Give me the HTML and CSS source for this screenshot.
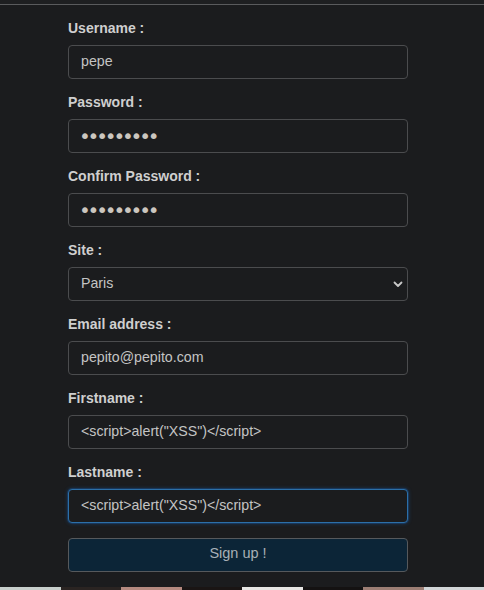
FILE: index.html
```html
<!DOCTYPE html>
<html lang="en">
<head>
<meta charset="utf-8">
<title>Sign up</title>
<link rel="stylesheet" href="styles.css">
</head>
<body>
<div class="topbar"></div>
<form class="signup">
  <div class="group">
    <label class="lbl" for="u">Username :</label>
    <input class="field" id="u" type="text" value="pepe">
  </div>
  <div class="group">
    <label class="lbl" for="p">Password :</label>
    <input class="field pw" id="p" type="password" value="pepepepep">
  </div>
  <div class="group">
    <label class="lbl" for="cp">Confirm Password :</label>
    <input class="field pw" id="cp" type="password" value="pepepepep">
  </div>
  <div class="group">
    <label class="lbl" for="s">Site :</label>
    <div class="selwrap">
      <select class="field sel" id="s"><option>Paris</option></select>
      <svg class="chev" width="10" height="8" viewBox="0 0 10 8"><path d="M1.5 2.5 L5 6 L8.5 2.5" fill="none" stroke="#c8c8c8" stroke-width="1.8" stroke-linecap="round" stroke-linejoin="round"/></svg>
    </div>
  </div>
  <div class="group">
    <label class="lbl" for="e">Email address :</label>
    <input class="field" id="e" type="text" value="pepito@pepito.com">
  </div>
  <div class="group">
    <label class="lbl" for="f">Firstname :</label>
    <input class="field" id="f" type="text" value="<script>alert(&quot;XSS&quot;)</script>">
  </div>
  <div class="group">
    <label class="lbl" for="l">Lastname :</label>
    <input class="field focused" id="l" type="text" value="<script>alert(&quot;XSS&quot;)</script>">
  </div>
  <button class="btn" type="button">Sign up !</button>
</form>
<div class="strip">
  <span class="s1"></span><span class="s2"></span><span class="s3"></span><span class="s4"></span><span class="s5"></span><span class="s6"></span><span class="s7"></span><span class="s8"></span>
</div>
</body>
</html>
```
FILE: styles.css
```css
html, body {
  margin: 0;
  padding: 0;
  background: #1b1c1e;
  font-family: "Liberation Sans", Arial, sans-serif;
}
.topbar {
  height: 4px;
  background: #1e1f21;
  border-bottom: 1px solid #5a5b5d;
}
.signup {
  width: 340px;
  margin: 0 0 0 68px;
  padding-top: 13px;
}
.group {
  margin-bottom: 13px;
}
.lbl {
  display: block;
  font-size: 14px;
  font-weight: bold;
  line-height: 20px;
  color: #cfcfcf;
  margin-bottom: 7px;
}
.field {
  display: block;
  box-sizing: border-box;
  width: 340px;
  height: 34px;
  padding: 0 12px 3px 12px;
  margin: 0;
  background: #1b1c1e;
  border: 1px solid #4b4c4e;
  border-radius: 4px;
  color: #c4c4c4;
  font-family: "Liberation Sans", Arial, sans-serif;
  font-size: 14.2px;
  outline: none;
}
.pw {
  font-family: "DejaVu Sans", sans-serif;
  font-size: 20px;
  letter-spacing: -3.2px;
  padding: 0 12px 1px 10px;
  color: #cbc6bf;
}
.selwrap {
  position: relative;
}
.sel {
  appearance: none;
  -webkit-appearance: none;
}
.chev {
  position: absolute;
  right: 5px;
  top: 13px;
}
.focused {
  border-color: #2c6fa8;
  box-shadow: 0 0 0 1px rgba(20, 80, 150, 0.35), 0 0 4px rgba(30, 110, 200, 0.45);
}
.btn {
  display: block;
  box-sizing: border-box;
  width: 340px;
  height: 34px;
  padding: 0 0 4px 0;
  margin: 15px 0 0 0;
  background: #0c2537;
  border: 1px solid #56595c;
  border-radius: 4px;
  color: #a9b0b6;
  font-family: "Liberation Sans", Arial, sans-serif;
  font-size: 14.5px;
}
.strip {
  display: flex;
  height: 10px;
  margin-top: 15px;
}
.strip span { flex: 1; }
.s1 { background: #c8cfcc; }
.s2 { background: #2a2422; }
.s3 { background: #b58a80; }
.s4 { background: #1a1514; }
.s5 { background: #e7e6e4; }
.s6 { background: #141212; }
.s7 { background: #9c7e74; }
.s8 { background: #d2d6d8; }
```
